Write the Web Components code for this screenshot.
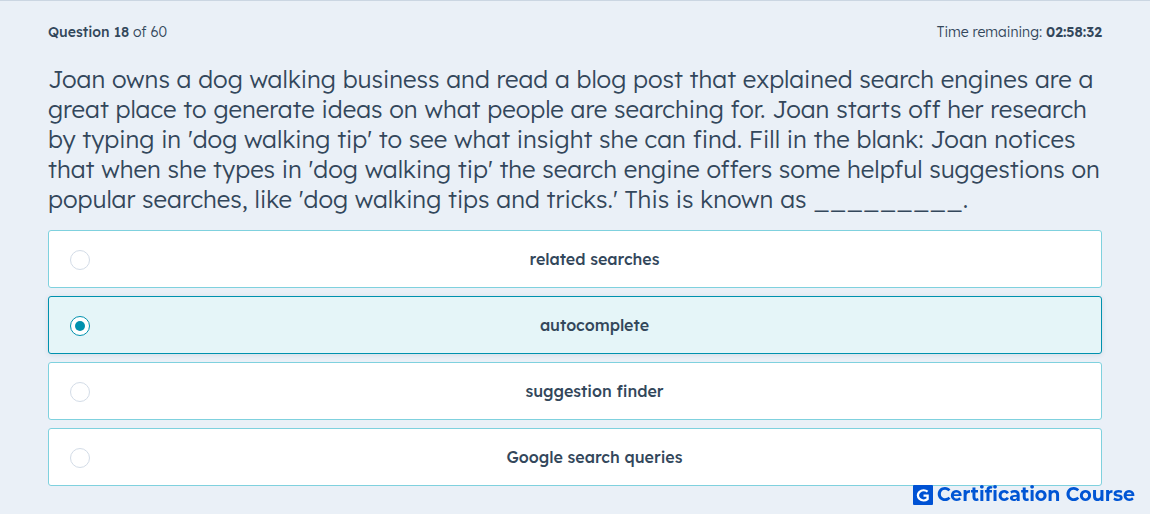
<!DOCTYPE html>
<html lang="en">
<head>
<meta charset="utf-8">
<meta name="viewport" content="width=device-width, initial-scale=1">
<title>Certification exam</title>
<style>
  body {
    margin: 0;
    min-height: 100vh;
    box-sizing: border-box;
    background: #eaf0f7;
    color: #33475b;
    border-top: 1px solid #cbd6e2;
    font-family: Lexend, Inter, sans-serif;
    font-weight: 300;
  }
</style>
</head>
<body>
<exam-page></exam-page>

<template id="exam-page">
  <style>
    :host { display: block; padding: 20px 48px 28px; }
    exam-status { margin-bottom: 21px; }
    h1 { margin: 0 0 16px; font-size: 24px; line-height: 30px; font-weight: 300; }
    brand-mark { position: fixed; right: 15px; bottom: 8px; }
  </style>
  <exam-status current="18" total="60" time="02:58:32"></exam-status>
  <main>
    <h1>Joan owns a dog walking business and read a blog post that explained search engines are a
      great place to generate ideas on what people are searching for. Joan starts off her research
      by typing in 'dog walking tip' to see what insight she can find. Fill in the blank: Joan notices
      that when she types in 'dog walking tip' the search engine offers some helpful suggestions on
      popular searches, like 'dog walking tips and tricks.' This is known as _________.</h1>
    <answer-list selected="1"></answer-list>
  </main>
  <brand-mark>Certification Course</brand-mark>
</template>

<template id="exam-status">
  <style>
    :host { display: flex; justify-content: space-between; gap: 16px; font-size: 14px; line-height: 22px; }
    b { font-weight: 500; }
    .time { font-weight: 600; }
  </style>
  <span><b>Question <span class="current"></span></b> of <span class="total"></span></span>
  <span>Time remaining: <b class="time"></b></span>
</template>

<template id="answer-list">
  <style>
    :host { display: block; }
    fieldset { border: 0; margin: 0; padding: 0; min-width: 0; display: grid; gap: 8px; }
    label {
      display: grid; grid-template-columns: 20px 1fr; column-gap: 19px; align-items: center;
      min-height: 58px; box-sizing: border-box; padding: 2px 21px 0;
      border: 1px solid #7fd1de; border-radius: 3px; background: #fff;
      font-size: 16px; line-height: 26px; font-weight: 500; text-align: center; cursor: pointer;
    }
    span { padding-bottom: 2px; }
    label:has(:checked) { background: #e5f5f8; border-color: #0091ae; box-shadow: 0 1px 5px rgb(51 71 91 / 12%); }
    input {
      appearance: none; box-sizing: border-box; width: 20px; height: 20px; margin: 0;
      border: 1px solid #d3dce7; border-radius: 50%; background: #fff;
      display: grid; place-items: center;
    }
    input:checked { border-color: #0091ae; }
    input:checked::before { content: ""; width: 10px; height: 10px; border-radius: 50%; background: #0091ae; }
  </style>
  <fieldset aria-label="Answers"></fieldset>
</template>

<template id="brand-mark">
  <style>
    :host { display: flex; align-items: center; gap: 4px; color: #0055d4; font: 700 19px/22px Montserrat, Inter, sans-serif; }
    svg { width: 20px; height: 20px; display: block; }
  </style>
  <svg viewBox="0 0 20 20" aria-hidden="true">
    <rect width="20" height="20" rx="1" fill="#0052d4"/>
    <path d="M14.6 6.6A5.8 5 0 1 0 14.6 14V10.6H10.5" fill="none" stroke="#fff" stroke-width="2.3"/>
  </svg>
  <slot></slot>
</template>

<script>
  class TemplateElement extends HTMLElement {
    constructor() {
      super();
      const template = document.getElementById(this.localName);
      this.attachShadow({ mode: "open" }).append(template.content.cloneNode(true));
    }
  }
  customElements.define("exam-status", class extends TemplateElement {
    connectedCallback() {
      for (const key of ["current", "total", "time"])
        this.shadowRoot.querySelector("." + key).textContent = this.getAttribute(key);
    }
  });
  customElements.define("answer-list", class extends TemplateElement {
    connectedCallback() {
      const answers = ["related searches", "autocomplete", "suggestion finder", "Google search queries"];
      const fieldset = this.shadowRoot.querySelector("fieldset");
      fieldset.replaceChildren(...answers.map((text, i) => {
        const label = document.createElement("label");
        const input = document.createElement("input");
        input.type = "radio";
        input.name = "answer";
        input.value = text;
        input.defaultChecked = i === Number(this.getAttribute("selected"));
        const caption = document.createElement("span");
        caption.textContent = text;
        label.append(input, caption);
        return label;
      }));
    }
  });
  customElements.define("brand-mark", class extends TemplateElement {});
  customElements.define("exam-page", class extends TemplateElement {});
</script>
</body>
</html>
